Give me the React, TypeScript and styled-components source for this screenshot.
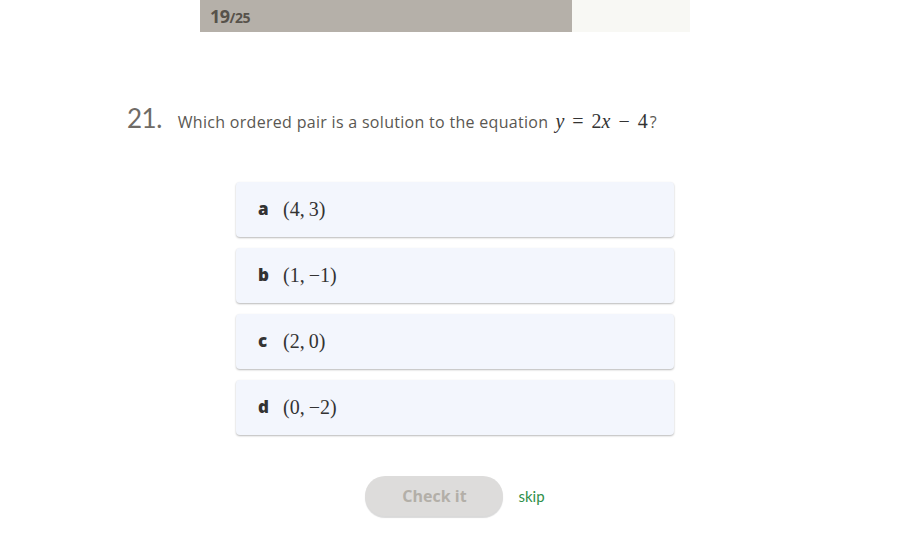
import * as React from 'react';
import styled, { createGlobalStyle } from 'styled-components';

const GlobalStyle = createGlobalStyle`
  html, body {
    margin: 0;
    padding: 0;
    background: #ffffff;
    font-family: 'Open Sans', 'Lato', sans-serif;
  }
`;

const options = [
  { letter: 'a', x: '4', y: '3' },
  { letter: 'b', x: '1', y: '\u22121' },
  { letter: 'c', x: '2', y: '0' },
  { letter: 'd', x: '0', y: '\u22122' },
];

const done = 19;
const total = 25;

const App: React.FC = () => (
  <Page>
    <GlobalStyle />
    <ProgressTrack>
      <ProgressFill style={{ width: `${(done / total) * 100}%` }}>
        <Count>
          {done}
          <Total>/{total}</Total>
        </Count>
      </ProgressFill>
    </ProgressTrack>

    <Question>
      <Number>21.</Number>
      <Prompt>
        Which ordered pair is a solution to the equation
        <Math>
          <Var>y</Var>
          <Op>=</Op>2<Var>x</Var>
          <Op>{'\u2212'}</Op>4
        </Math>
        ?
      </Prompt>
    </Question>

    <Choices>
      {options.map(o => (
        <Choice key={o.letter}>
          <Letter>{o.letter}</Letter>
          <Math>
            ({o.x},<Thin />
            {o.y})
          </Math>
        </Choice>
      ))}
    </Choices>

    <Actions>
      <CheckButton disabled>Check it</CheckButton>
      <Skip>skip</Skip>
    </Actions>
  </Page>
);

const Page = styled.div`
  width: 924px;
  min-height: 537px;
  display: flex;
  flex-direction: column;
`;

const ProgressTrack = styled.div`
  margin-left: 200px;
  width: 490px;
  height: 32px;
  background: #f8f8f4;
  display: flex;
`;

const ProgressFill = styled.div`
  height: 100%;
  background: #b5b0a9;
  display: flex;
  align-items: center;
  padding-left: 10px;
  box-sizing: border-box;
`;

const Count = styled.span`
  font-family: 'Open Sans', sans-serif;
  font-weight: 700;
  font-size: 18px;
  color: #57524b;
  letter-spacing: -0.5px;
`;

const Total = styled.span`
  font-size: 14px;
`;

const Question = styled.div`
  margin-top: 70px;
  padding-left: 127px;
  display: flex;
  align-items: baseline;
  gap: 16px;
`;

const Number = styled.span`
  font-family: 'Lato', sans-serif;
  font-size: 26px;
  color: #6f6b66;
  letter-spacing: -0.5px;
`;

const Prompt = styled.span`
  font-size: 16px;
  letter-spacing: 0.3px;
  color: #5a5752;
`;

const Math = styled.span`
  font-family: 'Liberation Serif', 'DejaVu Serif', serif;
  font-size: 20px;
  letter-spacing: 0;
  color: #333;
  margin: 0 2px 0 7px;
`;

const Var = styled.i`
  font-style: italic;
`;

const Op = styled.span`
  margin: 0 8px;
`;

const Thin = styled.span`
  display: inline-block;
  width: 4px;
`;

const Choices = styled.div`
  margin-top: 48px;
  margin-left: 236px;
  width: 438px;
  display: flex;
  flex-direction: column;
  gap: 11px;
`;

const Choice = styled.div`
  height: 55px;
  box-sizing: border-box;
  background: #f3f6fd;
  border-radius: 4px;
  box-shadow: 0 1px 2px rgba(0, 0, 0, 0.28);
  display: flex;
  align-items: center;
  padding-left: 22px;
  gap: 4px;
`;

const Letter = styled.span`
  font-family: 'Open Sans', sans-serif;
  font-weight: 800;
  font-size: 17px;
  color: #333;
  width: 14px;
  margin-top: -2px;
`;

const Actions = styled.div`
  margin-top: 41px;
  margin-left: 236px;
  width: 438px;
  display: flex;
  justify-content: center;
  align-items: center;
  gap: 15px;
`;

const CheckButton = styled.button`
  width: 138px;
  height: 40px;
  border: none;
  border-radius: 20px;
  background: #dddcdb;
  box-shadow: 0 2px 1px rgba(0, 0, 0, 0.15);
  font-family: 'Open Sans', sans-serif;
  font-weight: 700;
  font-size: 16px;
  color: #b3afa8;
  cursor: default;
`;

const Skip = styled.a`
  font-family: 'Lato', sans-serif;
  font-size: 15px;
  color: #2f8f4a;
  text-decoration: none;
`;

export default App;
